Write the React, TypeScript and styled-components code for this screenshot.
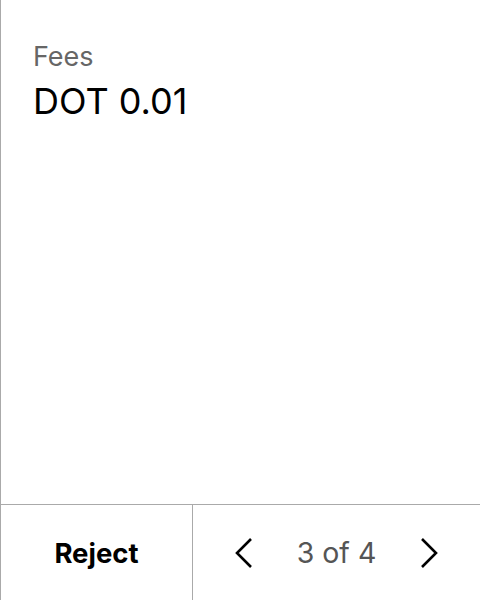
import React from "react";
import styled, { createGlobalStyle } from "styled-components";

const Global = createGlobalStyle`
  html, body { margin: 0; padding: 0; background: #fff; }
  body { font-family: Inter, "Noto Sans", sans-serif; }
`;

const Panel = styled.div`
  width: 480px;
  height: 600px;
  box-sizing: border-box;
  border-left: 1px solid #aaaaaa;
  display: flex;
  flex-direction: column;
  background: #fff;
`;

const Body = styled.div`
  flex: 1;
  padding: 41px 32px 0 32px;
  display: flex;
  flex-direction: column;
`;

const Label = styled.div`
  font-size: 27px;
  line-height: 32px;
  color: #666666;
`;

const Value = styled.div`
  font-size: 36px;
  line-height: 44px;
  color: #000;
  margin-top: 6px;
`;

const Footer = styled.div`
  height: 96px;
  border-top: 1px solid #aaaaaa;
  display: flex;
  box-sizing: border-box;
`;

const RejectButton = styled.button`
  width: 192px;
  box-sizing: border-box;
  border: none;
  border-right: 1px solid #aaaaaa;
  background: none;
  font-family: inherit;
  font-weight: 700;
  font-size: 27.5px;
  color: #000;
  padding: 0;
  cursor: pointer;
`;

const Pager = styled.div`
  flex: 1;
  display: flex;
  align-items: center;
  justify-content: center;
  gap: 44px;
`;

const Arrow = styled.button`
  border: none;
  background: none;
  padding: 0;
  display: flex;
  width: 18px;
  height: 32px;
  align-items: center;
  justify-content: center;
  cursor: pointer;
`;

const Count = styled.span`
  font-size: 28.5px;
  color: #555555;
`;

const Chevron = ({ dir }: { dir: "left" | "right" }) => (
  <svg width="18" height="32" viewBox="0 0 18 32" fill="none">
    <path
      d={dir === "left" ? "M16 2 L2 16 L16 30" : "M2 2 L16 16 L2 30"}
      stroke="#000"
      strokeWidth="2.6"
      strokeLinecap="butt"
      strokeLinejoin="miter"
    />
  </svg>
);

export default function App() {
  return (
    <>
      <Global />
      <Panel>
        <Body>
          <Label>Fees</Label>
          <Value>DOT 0.01</Value>
        </Body>
        <Footer>
          <RejectButton>Reject</RejectButton>
          <Pager>
            <Arrow aria-label="Previous">
              <Chevron dir="left" />
            </Arrow>
            <Count>3 of 4</Count>
            <Arrow aria-label="Next">
              <Chevron dir="right" />
            </Arrow>
          </Pager>
        </Footer>
      </Panel>
    </>
  );
}
